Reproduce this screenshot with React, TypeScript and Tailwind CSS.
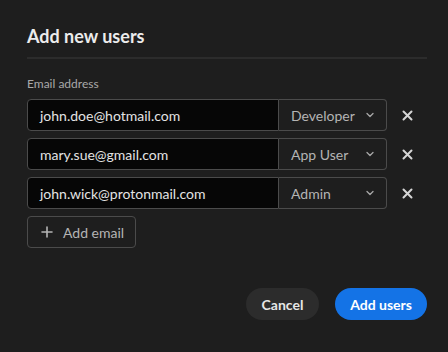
import React from 'react';

type Row = { email: string; role: string };

const rows: Row[] = [
  { email: 'john.doe@hotmail.com', role: 'Developer' },
  { email: 'mary.sue@gmail.com', role: 'App User' },
  { email: 'john.wick@protonmail.com', role: 'Admin' },
];

const Chevron = () => (
  <svg width="10" height="10" viewBox="0 0 10 10" fill="none" stroke="#a8a8a8" strokeWidth="1.3" strokeLinecap="round" strokeLinejoin="round">
    <path d="M2 3.5 5 6.5 8 3.5" />
  </svg>
);

const Cross = () => (
  <svg width="11" height="11" viewBox="0 0 11 11" fill="none" stroke="#d6d6d6" strokeWidth="2" strokeLinecap="round">
    <path d="M1.5 1.5 9.5 9.5M9.5 1.5 1.5 9.5" />
  </svg>
);

const EmailRow: React.FC<{ row: Row }> = ({ row }) => (
  <div className="flex items-center h-[32px]">
    <div className="w-[252px] shrink-0 h-full flex items-center pl-[12px] bg-[#060606] border border-[#4b4b4b] rounded-l-[4px] text-[14px] text-[#e3e3e3]">
      {row.email}
    </div>
    <div className="w-[108px] shrink-0 h-full flex items-center justify-between pl-[12px] pr-[11px] border border-l-0 border-[#4b4b4b] rounded-r-[4px] text-[14px] text-[#b4b4b4]">
      <span>{row.role}</span>
      <Chevron />
    </div>
    <button className="w-[40px] shrink-0 h-full flex items-center justify-center">
      <Cross />
    </button>
  </div>
);

export default function App() {
  return (
    <div className="w-[448px] h-[352px] bg-[#1e1e1e] pl-[27px] pr-[21px] pt-[24px]" style={{ fontFamily: 'Lato, "Noto Sans", sans-serif' }}>
      <h2 className="text-[18px] leading-[24px] font-bold text-[#ececec]">Add new users</h2>
      <div className="mt-[9px] h-[2px] w-[400px] bg-[#2c2c2c]" />
      <div className="mt-[17px] text-[12px] leading-[16px] text-[#a9a9a9]">Email address</div>
      <div className="mt-[7px] flex flex-col gap-[7px]">
        {rows.map((row, i) => (
          <EmailRow key={i} row={row} />
        ))}
      </div>
      <button className="mt-[7px] h-[32px] w-[109px] flex items-center gap-[10px] pl-[13px] border border-[#4b4b4b] rounded-[4px] text-[14px] text-[#b4b4b4]">
        <svg width="12" height="12" viewBox="0 0 12 12" fill="none" stroke="#b4b4b4" strokeWidth="1.6" strokeLinecap="round">
          <path d="M6 1v10M1 6h10" />
        </svg>
        Add email
      </button>
      <div className="mt-[40px] flex justify-end gap-[16px] w-[400px]">
        <button className="h-[32px] w-[73px] rounded-full bg-[#2c2c2c] text-[14px] font-bold text-[#e6e6e6]">Cancel</button>
        <button className="h-[32px] w-[92px] rounded-full bg-[#1473e6] text-[14px] font-bold text-white">Add users</button>
      </div>
    </div>
  );
}
